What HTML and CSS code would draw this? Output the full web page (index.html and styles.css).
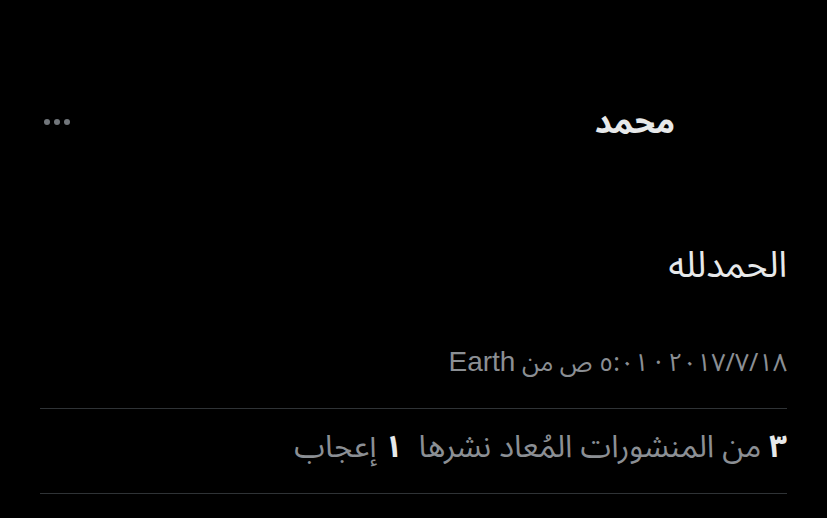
FILE: index.html
```html
<!DOCTYPE html>
<html lang="ar" dir="rtl">
<head>
<meta charset="utf-8">
<link rel="stylesheet" href="styles.css">
</head>
<body>
<div class="page">
  <header class="head">
    <div class="avatar"></div>
    <div class="name">محمد</div>
    <div class="more" aria-label="more"><span></span><span></span><span></span></div>
  </header>
  <div class="tweet">الحمدلله</div>
  <div class="meta">١٨&rlm;/٧&rlm;/٢٠١٧ · ٥:٠١ ص من <span class="lat">Earth</span></div>
  <div class="stats"><b>٣</b> من المنشورات المُعاد نشرها&nbsp;&nbsp;<b>١</b> إعجاب</div>
</div>
</body>
</html>
```
FILE: styles.css
```css
html, body {
  margin: 0;
  background: #000;
}
body {
  font-family: "Noto Sans Arabic", "Noto Naskh Arabic", "Noto Kufi Arabic", "DejaVu Sans", sans-serif;
  color: #e7e9ea;
}
.page {
  padding: 90px 40px 0;
}
.head {
  display: flex;
  align-items: center;
  height: 64px;
}
.avatar {
  width: 112px;
  height: 64px;
  flex: none;
}
.name {
  font-size: 33px;
  font-weight: bold;
  flex: 1;
  color: #e7e9ea;
}
.more {
  display: flex;
  gap: 4px;
  align-items: center;
  padding-left: 4px;
}
.more span {
  width: 6px;
  height: 6px;
  border-radius: 50%;
  background: #71767b;
}
.tweet {
  margin-top: 92px;
  font-size: 36px;
  line-height: 40px;
  color: #e7e9ea;
}
.meta {
  margin-top: 56px;
  font-size: 25px;
  line-height: 40px;
  color: #8b8f94;
  padding-bottom: 25px;
  border-bottom: 1px solid #2f3336;
}
.lat {
  font-family: "Liberation Sans", sans-serif;
  font-size: 28px;
}
.stats {
  padding: 18px 0 26px;
  font-size: 31px;
  line-height: 40px;
  color: #8b8f94;
  border-bottom: 1px solid #2f3336;
}
.stats b {
  color: #e7e9ea;
}
```
